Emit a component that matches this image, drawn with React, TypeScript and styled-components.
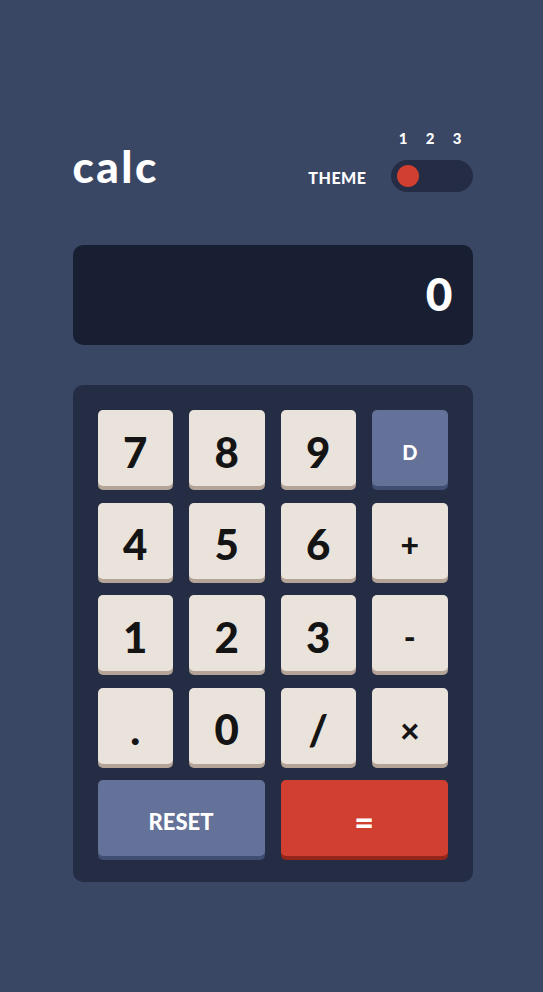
import React from "react";
import styled, { createGlobalStyle } from "styled-components";

const GlobalStyle = createGlobalStyle`
  html, body {
    margin: 0;
    padding: 0;
    background: #3a4764;
  }
  body {
    font-family: "Lato", "DejaVu Sans", sans-serif;
    -webkit-font-smoothing: antialiased;
  }
`

const Page = styled.main`
  min-height: 992px;
  display: flex;
  justify-content: center;
  padding-left: 2px;
  box-sizing: border-box;
  background: #3a4764;
`

const Calculator = styled.div`
  width: 400px;
  padding-top: 129px;
  display: flex;
  flex-direction: column;
`

const Header = styled.header`
  display: flex;
  justify-content: space-between;
  align-items: flex-end;
  color: #ffffff;
`

const Logo = styled.h1`
  margin: 0 0 4px 0;
  font-size: 44px;
  font-weight: 900;
  line-height: 1;
  letter-spacing: 2.5px;
`

const Theme = styled.div`
  display: flex;
  align-items: flex-end;
  gap: 24px;
`

const ThemeLabel = styled.span`
  font-size: 16px;
  font-weight: 900;
  letter-spacing: 0.5px;
  margin-bottom: 5px;
`

const Switcher = styled.div`
  display: flex;
  flex-direction: column;
  gap: 13px;
  width: 82px;
`

const Numbers = styled.div`
  display: grid;
  grid-template-columns: repeat(3, 27px);
  margin-left: -1px;
  font-size: 15px;
  font-weight: 900;
  text-align: center;
`

const Track = styled.div`
  height: 32px;
  border-radius: 16px;
  background: #242d44;
  display: flex;
  align-items: center;
  padding: 0 6px;
`

const Knob = styled.span`
  width: 22px;
  height: 22px;
  border-radius: 50%;
  background: #d03f2f;
`

const Screen = styled.div`
  margin-top: 53px;
  height: 100px;
  border-radius: 10px;
  background: #181f33;
  color: #ffffff;
  display: flex;
  align-items: center;
  justify-content: flex-end;
  padding: 0 20px 4px;
  box-sizing: border-box;
  font-size: 46px;
  font-weight: 900;
`

const Keypad = styled.div`
  margin-top: 40px;
  padding: 25px 25px 22px;
  border-radius: 10px;
  background: #242d44;
  display: grid;
  grid-template-columns: repeat(4, 1fr);
  column-gap: 16px;
  row-gap: 12.5px;
`

type Variant = "num" | "del" | "eq"

const palette: Record<Variant, { face: string; shade: string; text: string }> = {
  num: { face: "#eae3dc", shade: "#b3a497", text: "#141414" },
  del: { face: "#647198", shade: "#414e73", text: "#ffffff" },
  eq: { face: "#d03f2f", shade: "#93261a", text: "#ffffff" },
}

const Key = styled.button<{ $variant: Variant; $wide?: boolean; $size: number }>`
  grid-column: ${(p) => (p.$wide ? "span 2" : "span 1")};
  height: 76px;
  margin-bottom: 4px;
  border: none;
  border-radius: 5px;
  background: ${(p) => palette[p.$variant].face};
  box-shadow: 0 4px 0 ${(p) => palette[p.$variant].shade};
  color: ${(p) => palette[p.$variant].text};
  font-family: "Lato", "DejaVu Sans", sans-serif;
  font-size: ${(p) => p.$size}px;
  font-weight: 900;
  display: flex;
  align-items: center;
  justify-content: center;
  padding: 7px 0 0;
  cursor: pointer;
`

const keys: { label: string; variant: Variant; wide?: boolean; size: number }[] = [
  { label: "7", variant: "num", size: 42 },
  { label: "8", variant: "num", size: 42 },
  { label: "9", variant: "num", size: 42 },
  { label: "D", variant: "del", size: 20 },
  { label: "4", variant: "num", size: 42 },
  { label: "5", variant: "num", size: 42 },
  { label: "6", variant: "num", size: 42 },
  { label: "+", variant: "num", size: 32 },
  { label: "1", variant: "num", size: 42 },
  { label: "2", variant: "num", size: 42 },
  { label: "3", variant: "num", size: 42 },
  { label: "-", variant: "num", size: 32 },
  { label: ".", variant: "num", size: 42 },
  { label: "0", variant: "num", size: 42 },
  { label: "/", variant: "num", size: 42 },
  { label: "×", variant: "num", size: 34 },
  { label: "RESET", variant: "del", wide: true, size: 22 },
  { label: "=", variant: "eq", wide: true, size: 34 },
]

const App = () => {
  return (
    <>
      <GlobalStyle />
      <Page>
        <Calculator>
          <Header>
            <Logo>calc</Logo>
            <Theme>
              <ThemeLabel>THEME</ThemeLabel>
              <Switcher>
                <Numbers>
                  <span>1</span>
                  <span>2</span>
                  <span>3</span>
                </Numbers>
                <Track>
                  <Knob />
                </Track>
              </Switcher>
            </Theme>
          </Header>
          <Screen>0</Screen>
          <Keypad>
            {keys.map((k) => (
              <Key key={k.label} $variant={k.variant} $wide={k.wide} $size={k.size}>
                {k.label}
              </Key>
            ))}
          </Keypad>
        </Calculator>
      </Page>
    </>
  )
}

export default App;
